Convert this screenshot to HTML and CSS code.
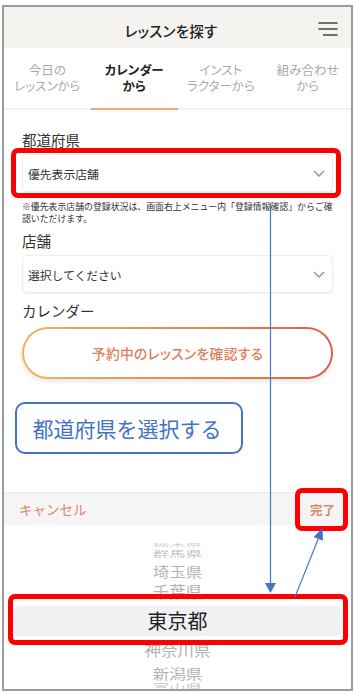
FILE: index.html
```html
<!DOCTYPE html>
<html lang="ja">
<head>
<meta charset="utf-8">
<title>レッスンを探す</title>
<link rel="stylesheet" href="styles.css">
</head>
<body>
<div class="frame">
  <header class="header">
    <span></span>
    <h1 class="title">レッスンを探す</h1>
    <svg class="menu" width="20" height="14" viewBox="0 0 20 14" aria-hidden="true">
      <path d="M0.5 1H19.5M0.5 7H19.5M5 13H19.5" stroke="#444" stroke-width="1.5" fill="none"/>
    </svg>
  </header>

  <nav class="tabs">
    <div class="tab">今日の<br>レッスンから</div>
    <div class="tab is-active">カレンダー<br>から</div>
    <div class="tab">インスト<br>ラクターから</div>
    <div class="tab">組み合わせ<br>から</div>
  </nav>

  <main class="content">
    <div class="label">都道府県</div>
    <div class="select">
      <span>優先表示店舗</span>
      <svg width="12" height="7" viewBox="0 0 12 7" aria-hidden="true"><path d="M1 1L6 6L11 1" stroke="#7f9fc4" stroke-width="1.5" fill="none"/></svg>
    </div>
    <p class="note">※優先表示店舗の登録状況は、画面右上メニュー内「登録情報確認」からご確認いただけます。</p>

    <div class="label label-gap">店舗</div>
    <div class="select">
      <span>選択してください</span>
      <svg width="12" height="7" viewBox="0 0 12 7" aria-hidden="true"><path d="M1 1L6 6L11 1" stroke="#7f9fc4" stroke-width="1.5" fill="none"/></svg>
    </div>

    <div class="label label-gap2">カレンダー</div>
    <div class="pill">予約中のレッスンを確認する</div>

    <div class="callout">都道府県を選択する</div>
  </main>

  <div class="toolbar">
    <span class="tb-cancel">キャンセル</span>
    <span class="tb-done">完了</span>
  </div>

  <div class="wheel">
    <div class="w-row r-a">栃木県</div>
    <div class="w-row r-b">群馬県</div>
    <div class="w-row r-c">埼玉県</div>
    <div class="w-row r-d">千葉県</div>
    <div class="w-sel">東京都</div>
    <div class="w-row r-e">神奈川県</div>
    <div class="w-row r-f">新潟県</div>
    <div class="w-row r-g">富山県</div>
  </div>

  <div class="mark mark-pref"></div>
  <div class="mark mark-done"></div>
  <div class="mark mark-sel"></div>

  <svg class="arrows" width="347" height="682" viewBox="0 0 347 682" aria-hidden="true">
    <line x1="266.5" y1="196" x2="266.5" y2="577" stroke="#4a76c8" stroke-width="1.2"/>
    <polygon points="261,576 272,576 266.5,586" fill="#4472c4"/>
    <line x1="291" y1="590" x2="314.2" y2="532" stroke="#4a76c8" stroke-width="1.2"/>
    <polygon points="318.9,533.7 309.6,530 318.7,520.7" fill="#4472c4"/>
  </svg>
</div>
</body>
</html>
```

FILE: styles.css
```css
* { box-sizing: border-box; }

html, body {
  margin: 0;
  padding: 0;
  background: #fff;
}

body {
  font-family: "Noto Sans CJK JP", "Noto Sans", sans-serif;
  color: #333;
}

.frame {
  position: relative;
  margin: 5px 0 0 2px;
  width: 351px;
  height: 686px;
  border: 2px solid #9b9b9b;
  background: #fff;
  display: flex;
  flex-direction: column;
  overflow: hidden;
}

/* header */
.header {
  height: 41px;
  flex: none;
  background: #f5f3ef;
  display: grid;
  grid-template-columns: 1fr auto 1fr;
  align-items: center;
  padding: 5px 13px 0 0;
}

.title {
  margin: 0;
  font-size: 14.5px;
  font-weight: 500;
  color: #222;
  letter-spacing: 0.2px;
  font-feature-settings: "palt";
}

.menu {
  justify-self: end;
  margin-top: -3px;
}

/* tabs */
.tabs {
  height: 62px;
  flex: none;
  display: grid;
  grid-template-columns: repeat(4, 1fr);
}

.tab {
  display: flex;
  align-items: center;
  justify-content: center;
  text-align: center;
  font-size: 12.5px;
  line-height: 16px;
  color: #aaa;
  border-bottom: 2px solid #f1f1f1;
  font-feature-settings: "palt";
  padding-bottom: 0;
}

.tab.is-active {
  color: #222;
  font-weight: 700;
  border-bottom-color: #f0a672;
}

/* content */
.content {
  height: 382px;
  flex: none;
  padding: 20px 18px 0 18px;
}

.label {
  font-size: 14.5px;
  line-height: 20px;
  color: #333;
}

.label-gap { margin-top: 6px; }
.label-gap2 { margin-top: 8px; }

.select {
  margin-top: 4px;
  height: 38px;
  border: 1px solid #ededed;
  border-radius: 5px;
  box-shadow: 0 1px 2px rgba(0, 0, 0, 0.05);
  display: flex;
  align-items: center;
  justify-content: space-between;
  padding: 0 7px 0 5px;
  font-size: 11.8px;
  color: #333;
}

.note {
  margin: 9px -6px 0 0;
  font-size: 8.9px;
  line-height: 12px;
  color: #333;
}

.pill {
  margin-top: 6px;
  height: 52px;
  border-radius: 26px;
  border: 2px solid transparent;
  background:
    linear-gradient(#fff, #fff) padding-box,
    linear-gradient(90deg, #ebb560, #e48a55 55%, #d9614b) border-box;
  box-shadow: 0 3px 5px rgba(0, 0, 0, 0.09);
  display: flex;
  align-items: center;
  justify-content: center;
  font-size: 13.8px;
  font-weight: 500;
  color: #e07d58;
  font-feature-settings: "palt";
  letter-spacing: 0.3px;
}

.callout {
  margin: 23px 0 0 -7px;
  width: 228px;
  height: 52px;
  border: 2px solid #4472c4;
  border-radius: 10px;
  display: flex;
  align-items: center;
  justify-content: center;
  font-size: 21px;
  color: #4472c4;
  padding-right: 4px;
}

/* picker toolbar */
.toolbar {
  height: 33px;
  flex: none;
  border-top: 1px solid #ebebeb;
  background: #f6f5f5;
  display: flex;
  align-items: center;
  justify-content: space-between;
  padding: 0 16px 0 15px;
  color: #d8896b;
}

.tb-cancel {
  font-size: 13.5px;
}

.tb-done {
  font-size: 12.5px;
  font-weight: 700;
}

/* picker wheel */
.wheel {
  height: 164px;
  flex: none;
  overflow: hidden;
  padding-top: 16px;
  display: flex;
  flex-direction: column;
  text-align: center;
}

.w-row {
  flex: none;
  color: #b3b3b3;
  font-size: 16.5px;
  white-space: nowrap;
}

.r-a { height: 8px; line-height: 8px; transform: scaleY(0.25); color: #cfcfcf; }
.r-b { height: 8px; line-height: 8px; transform: scaleY(0.5); color: #c2c2c2; }
.r-c { height: 28px; line-height: 28px; transform: scaleY(0.85); }
.r-d { height: 12px; line-height: 12px; transform: scaleY(0.95); }
.r-e { height: 26px; line-height: 26px; transform: scaleY(0.95); }
.r-f { height: 22px; line-height: 22px; transform: scaleY(0.85); }
.r-g { height: 8px; line-height: 8px; transform: scaleY(0.6); color: #c6c6c6; }

.w-sel {
  flex: none;
  margin: 9px 9px 0 9px;
  height: 30px;
  line-height: 30px;
  border-radius: 7px;
  background: #f1f1f3;
  font-size: 20px;
  color: #222;
}

/* annotation overlays */
.mark {
  position: absolute;
  border: 5px solid #ff0000;
  border-radius: 7px;
}

.mark-pref { left: 7px; top: 141px; width: 330px; height: 50px; }
.mark-done { left: 291px; top: 481px; width: 53px; height: 43px; }
.mark-sel  { left: 4px; top: 587px; width: 340px; height: 51px; }

.arrows {
  position: absolute;
  left: 0;
  top: 0;
  pointer-events: none;
}
```
